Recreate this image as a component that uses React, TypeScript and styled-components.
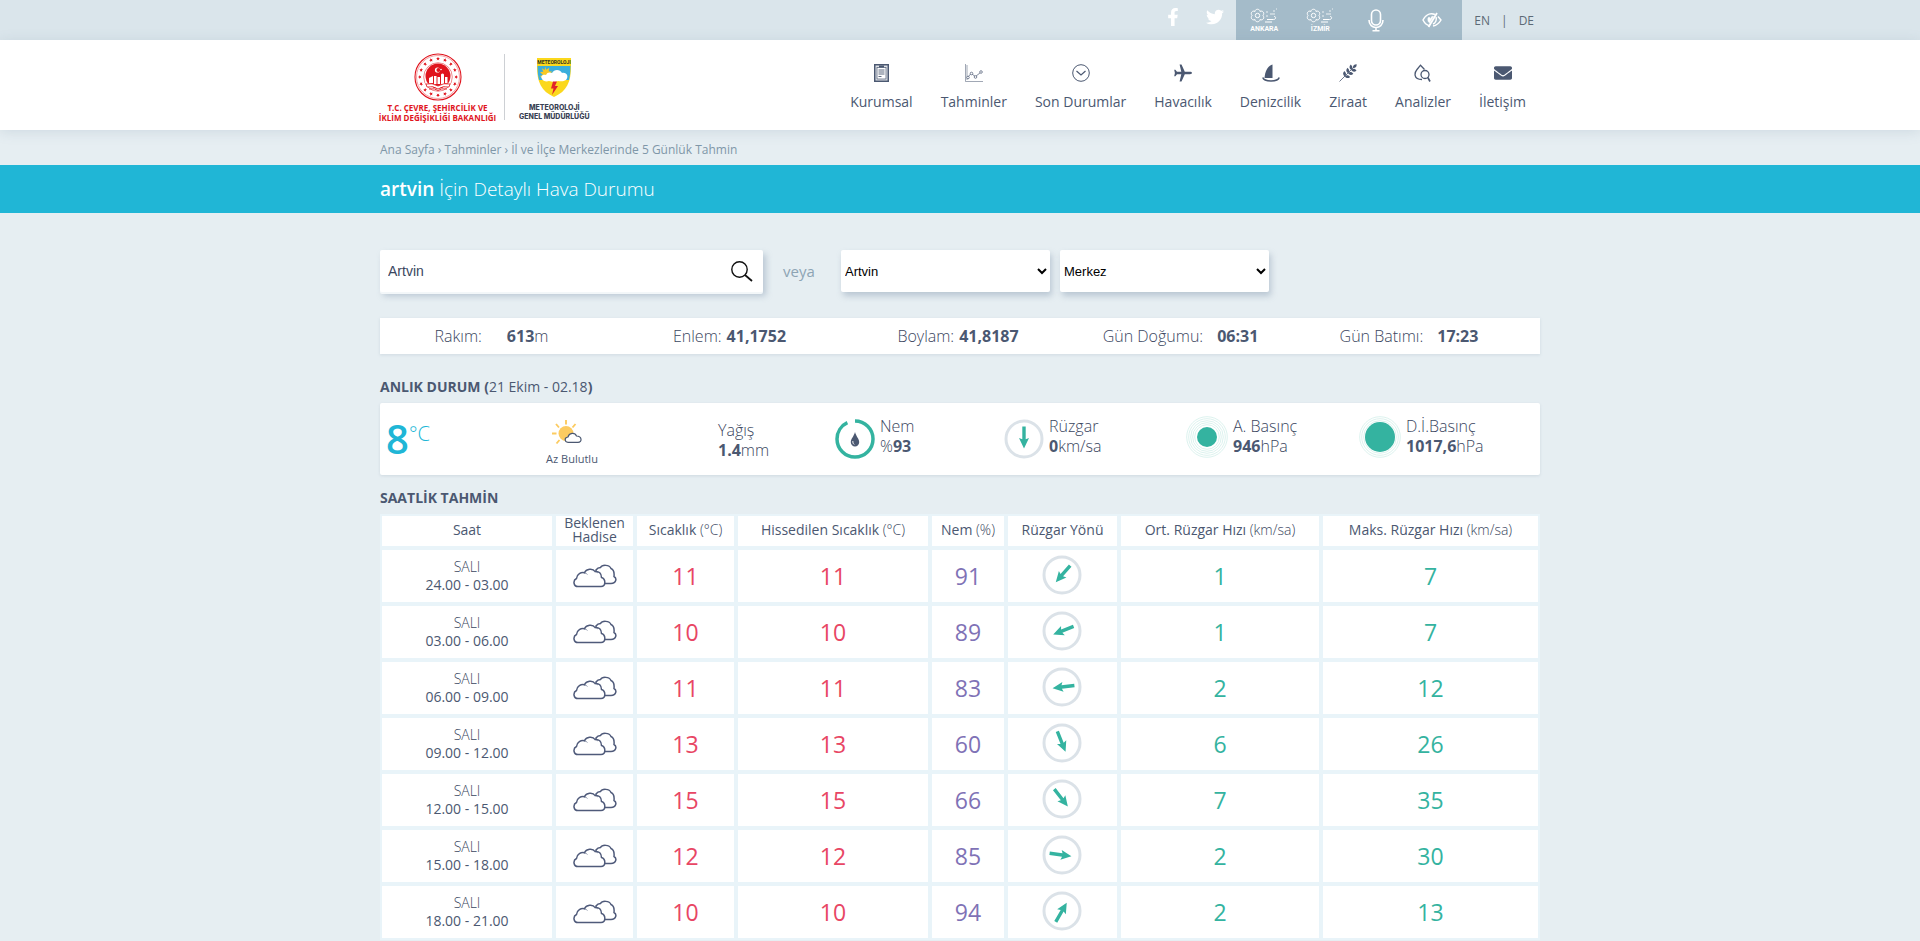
import React from 'react';
import styled, { createGlobalStyle } from 'styled-components';
import { FaFacebookF, FaTwitter, FaEnvelope } from 'react-icons/fa';

const c = {
  ink: '#4b5871',
  thin: '#3a4660',
  muted: '#8da4b4',
  cyan: '#20b6d6',
  teal: '#34b3a0',
  ring: '#dbe2e8',
  red: '#e0141d',
};

const GlobalStyle = createGlobalStyle`
  * { box-sizing: border-box; }
  html { background: #e6eef2; }
  body {
    margin: 0;
    background: #e6eef2;
    color: ${c.ink};
    font-family: "Open Sans", "Noto Sans", sans-serif;
    font-size: 14px;
    overflow-x: hidden;
  }
  a { color: inherit; text-decoration: none; }
  svg { display: block; }
  button { border: 0; background: none; padding: 0; color: inherit; cursor: pointer; }
`;

const Container = styled.div`
  max-width: 1160px;
  margin: 0 auto;
`;

const TopBar = styled.div`
  background: #dae5eb;
`;
const TopInner = styled(Container)`
  display: flex;
  justify-content: flex-end;
  height: 40px;
`;
const Social = styled.a`
  display: flex;
  justify-content: center;
  width: 42px;
  padding-top: 8px;
  color: #fff;
  font-size: 18px;
`;
const Tools = styled.div`
  display: flex;
  align-items: center;
  width: 226px;
  padding-right: 2px;
  background: #a4bbc9;
  color: #fff;
`;
const Tool = styled.button`
  display: flex;
  flex-direction: column;
  align-items: center;
  gap: 1px;
  flex: 1 1 0;
  color: #fff;
  font: bold 7px/8px "Roboto", sans-serif;
`;
const Languages = styled.nav`
  display: flex;
  align-items: center;
  gap: 11px;
  padding: 0 6px 0 12px;
  font-size: 12px;
  color: #5c6a76;
`;

const Header = styled.header`
  position: relative;
  background: #fff;
  box-shadow: 0 2px 12px rgba(100, 130, 150, 0.18);
`;
const HeaderInner = styled(Container)`
  display: flex;
  justify-content: space-between;
  height: 90px;
`;
const Logos = styled.div`
  display: flex;
  padding-top: 13px;
`;
const Ministry = styled.a`
  display: flex;
  flex-direction: column;
  align-items: center;
  width: 115px;
  color: ${c.red};
  font: 700 8px/10px "Open Sans", sans-serif;
  text-align: center;
  white-space: nowrap;
  svg { margin-bottom: 2px; }
`;
const Divider = styled.span`
  width: 1px;
  height: 66px;
  margin: 1px 14px 0 9px;
  background: #cdd0d4;
`;
const Institute = styled.a`
  display: flex;
  flex-direction: column;
  align-items: center;
  padding-top: 5px;
  color: #3a4254;
  font: 800 7px/9px "Inter", sans-serif;
  text-align: center;
  svg { margin-bottom: 6px; }
`;
const Menu = styled.nav`
  display: flex;
  gap: 28px;
  padding: 24px 14px 0 0;
`;
const MenuItem = styled.a`
  display: flex;
  flex-direction: column;
  align-items: center;
  gap: 10px;
  line-height: 20px;
  white-space: nowrap;
`;

const Breadcrumb = styled(Container)`
  height: 35px;
  padding-top: 10px;
  font-size: 12px;
  line-height: 20px;
  color: #7f97a8;
`;
const Banner = styled.div`
  background: ${c.cyan};
  color: #fff;
`;
const Title = styled.h1`
  max-width: 1160px;
  margin: 0 auto;
  font-size: 19px;
  font-weight: 300;
  line-height: 48px;
  b { font-weight: 600; }
`;

const SearchRow = styled.form`
  display: flex;
  align-items: center;
  height: 42px;
  margin-top: 37px;
`;
const SearchBox = styled.div`
  display: flex;
  align-items: center;
  width: 383px;
  height: 42px;
  padding-right: 10px;
  background: #fff;
  border-radius: 2px;
  box-shadow: 0 2px 0 #f3f7f9, 3px 4px 6px rgba(120, 140, 165, 0.4);
`;
const SearchInput = styled.input`
  flex: 1;
  min-width: 0;
  height: 100%;
  padding: 0 8px;
  border: 0;
  background: none;
  outline: none;
  color: ${c.thin};
  font: 14px "Liberation Sans", sans-serif;
`;
const Or = styled.span`
  width: 78px;
  padding-left: 20px;
  font-size: 15px;
  color: ${c.muted};
`;
const Select = styled.select`
  width: 209px;
  height: 42px;
  margin-right: 10px;
  border: 0;
  border-radius: 2px;
  background: #fff;
  color: #000;
  font: 13px "Liberation Sans", sans-serif;
  box-shadow: 2px 4px 6px rgba(120, 140, 165, 0.4);
`;

const Place = styled.section`
  display: grid;
  grid-template-columns: 223fr 253fr 204fr 241fr 216fr;
  align-items: center;
  height: 36px;
  margin-top: 26px;
  padding-right: 23px;
  background: #fff;
  box-shadow: 0 1px 3px rgba(120, 140, 165, 0.2);
  color: ${c.thin};
  font-size: 16px;
  font-weight: 300;
`;
const Fact = styled.div<{ $gap: number }>`
  display: flex;
  justify-content: center;
  gap: ${(p) => p.$gap}px;
  b { color: ${c.ink}; font-weight: 700; }
`;

const Heading = styled.h2`
  margin: 0;
  padding: 22px 0 5px;
  font-size: 14px;
  font-weight: 700;
  line-height: 22px;
  span { font-weight: 400; }
`;
const HourHeading = styled(Heading)`
  padding: 12px 0 5px;
`;

const Now = styled.section`
  display: grid;
  grid-template-columns: 160fr 172fr 117fr 169fr 182fr 173fr 181fr;
  height: 72px;
  padding-left: 6px;
  background: #fff;
  border-radius: 2px;
  box-shadow: 0 1px 3px rgba(120, 140, 165, 0.2);
`;
const Degree = styled.div`
  display: flex;
  padding-top: 16px;
  color: ${c.cyan};
  font-size: 40px;
  font-weight: 600;
  line-height: 40px;
  sup { font-size: 20px; line-height: 30px; font-weight: 300; }
`;
const Event = styled.div`
  display: flex;
  flex-direction: column;
  align-items: center;
  width: 52px;
  padding-top: 17px;
  font-size: 11px;
  line-height: 16px;
  white-space: nowrap;
  svg { margin: 0 0 6px -10px; }
`;
const Measure = styled.div<{ $top: number }>`
  display: flex;
  gap: 5px;
  padding-top: ${(p) => p.$top}px;
  color: ${c.thin};
  font-size: 16px;
  font-weight: 300;
  line-height: 20px;
  white-space: nowrap;
  b { color: ${c.ink}; font-weight: 700; }
`;
const Gauge = styled.span`
  padding-top: 3px;
`;

const Table = styled.table`
  width: 100%;
  table-layout: fixed;
  border-spacing: 0;
  text-align: center;
`;
const HeadCell = styled.th<{ $w: number }>`
  width: ${(p) => p.$w}px;
  height: 34px;
  padding: 0 0 2px;
  border: 2px solid #e9f4f9;
  background: #fff;
  font-weight: 400;
  font-size: 14px;
  line-height: 14px;
  span { color: ${c.thin}; font-weight: 300; }
`;
const Cell = styled.td<{ $color?: string }>`
  height: 56px;
  padding: 0;
  border: 2px solid #e9f4f9;
  background: #fff;
  color: ${(p) => p.$color ?? c.ink};
  font-size: ${(p) => (p.$color ? 23 : 14)}px;
  line-height: 18px;
  svg { margin: 0 auto; }
`;
const Compass = styled.div`
  padding: 0 2px 2px 0;
`;
const Day = styled.div`
  color: ${c.thin};
  font-weight: 300;
`;

const CityIcon = () => (
  <svg width="28" height="16" viewBox="0 0 28 16" fill="none" stroke="#fff">
    <path d="M5 3.500C5 .5 10 .5 10 3.500C12.500 2 15 5 13 7.500C15 10 12.500 13 10 11.500C10 14.500 5 14.500 5 11.500C2.500 13 0 10 2 7.500C0 5 2.500 2 5 3.500Z" />
    <circle cx="7.500" cy="7.500" r="2.200" />
    <path d="M17 11.500H23.500C26.500 11.500 26 8 24 8.500M15 14H22" />
    <path d="M16 4h2M16 8h2M20 6h5M23 3h2M26 1h1" opacity=".8" />
  </svg>
);

const MicIcon = () => (
  <svg width="16" height="23" viewBox="0 0 16 23" fill="none" stroke="#fff" strokeWidth="1.600">
    <rect x="3.500" y="1" width="9" height="15" rx="4.500" />
    <path d="M1 11C1 21 15 21 15 11M8 18.500V21M4.500 21.700H11.500" />
  </svg>
);

const EyeOffIcon = () => (
  <svg width="20" height="16" viewBox="0 0 20 16" fill="none" stroke="#fff" strokeWidth="1.500">
    <path d="M8 14C4 13 2 10 1 8C4 2 9 1 13 2.500M16 4.500L19 8C17 11.500 14 13.500 11 14" />
    <path d="M15 1L6.500 15" strokeWidth="1.800" />
    <path d="M6 6C5.500 8 6 10 7.500 11L11.500 4.500C9.500 4 9 5 9 7L7 5Z" fill="#fff" strokeWidth=".5" />
    <path d="M14 5C15 8 13.500 11 11 12" />
  </svg>
);

const StarRing = () => (
  <g fill={c.red}>
    {Array.from({ length: 16 }, (_, i) => (
      <path
        key={i}
        d="M0 -1.900L.55 -.6L1.900 -.6L.85 .3L1.200 1.700L0 .9L-1.200 1.700L-.85 .3L-1.900 -.6L-.55 -.6Z"
        transform={`translate(24 24) rotate(${i * 22.5}) translate(0 -18.300)`}
      />
    ))}
  </g>
);

const Emblem = () => (
  <svg width="48" height="48" viewBox="0 0 48 48">
    <circle cx="24" cy="24" r="23" fill="#fff" stroke={c.red} strokeWidth="1.100" />
    <circle cx="24" cy="24" r="21.500" fill="none" stroke={c.red} strokeWidth=".4" />
    <StarRing />
    <circle cx="24" cy="24" r="14.300" fill="none" stroke={c.red} strokeWidth=".5" />
    <circle cx="24" cy="23" r="12.500" fill={c.red} />
    <circle cx="23.500" cy="17" r="2.600" fill="#fff" />
    <circle cx="24.400" cy="17" r="2" fill={c.red} />
    <circle cx="27" cy="16.500" r=".8" fill="#fff" />
    <path d="M15 25l4-2v7h-4zM20 23h2.500v8H20zM23.500 24h2.500v7h-2.500zM27 21.500q1.500-2 3 0V31h-3zM31 24h2.500v6H31z" fill="#fff" />
    <path d="M12 31Q18 29.500 24 33Q30 29.500 36 31L35 34Q29 32.500 24 36Q19 32.500 13 34Z" fill="#fff" stroke={c.red} strokeWidth=".8" />
    <path d="M15 36Q21 35 24 37.500Q27 35 33 36" fill="none" stroke={c.red} strokeWidth=".9" />
  </svg>
);

const Shield = () => (
  <svg width="36" height="39" viewBox="0 0 36 39">
    <path d="M1 0H35V8C35 24 31 33 18 39C5 33 1 24 1 8Z" fill="#fbd81d" />
    <path d="M1.500 8H34.500Q34.500 16 33 22H3Q1.500 16 1.500 8Z" fill="#3aaedb" />
    <path d="M9 8.500l1.300 3.300 3-2-.6 3.500 3.600.4-3 2.200 1.700 3L7 21l-3-3 3-1-3-3 3.300-.2-1.500-3.500 3 1.700z" fill="#f8c822" />
    <path d="M6 21C4 18 7 16 10 17C11 14 14 14 16 15C18 11 24 11 26 15C31 14 33 19 30 22C27 24 24 23 22 23C18 25 15 23 13 23C10 24 7 23 6 21Z" fill="#fff" />
    <path d="M17 23.500h4l-2 4.500h3l-6 9 1.500-6.500H15z" fill="#e0232b" />
    <text x="18" y="6" textAnchor="middle" fontFamily="Roboto, sans-serif" fontSize="5" fontWeight="700" fill="#33341d">METEOROLOJI</text>
  </svg>
);

const BookIcon = () => (
  <svg width="15" height="18" viewBox="0 0 15 18">
    <rect width="15" height="18" fill={c.ink} />
    <rect x="1.500" y="1.500" width="12" height="15" fill="#dfe2e7" />
    <rect x="3" y="3.500" width="9" height="11.500" fill="#fff" stroke={c.ink} strokeWidth=".7" />
    <path d="M5 1.500h5v2H5z" fill={c.ink} />
    <path d="M4.500 6H10.500M4.500 8H10.500M4.500 10H10.500M4.500 12.500H7.500" stroke={c.ink} strokeWidth=".9" />
  </svg>
);

const ChartIcon = () => (
  <svg width="18" height="18" viewBox="0 0 18 18" fill="none" stroke={c.ink} strokeWidth=".7">
    <path d="M.5 0V17.500H18M2 1V16" opacity=".75" />
    <path d="M3 13L6 9.500L10.500 12.500L15.500 8.500" />
    <circle cx="3" cy="13.500" r="1.300" fill="#fff" /><circle cx="6.500" cy="9.500" r="1.300" fill="#fff" />
    <circle cx="10.500" cy="13" r="1.300" fill="#fff" /><circle cx="16" cy="8" r="1.300" fill="#fff" />
  </svg>
);

const ClockDownIcon = () => (
  <svg width="18" height="18" viewBox="0 0 18 18" fill="none" stroke={c.ink}>
    <circle cx="9" cy="9" r="8.300" />
    <path d="M4.500 7L9 11L13.500 7" strokeWidth="1.200" />
  </svg>
);

const PlaneIcon = () => (
  <svg width="18" height="18" viewBox="0 0 18 18" fill={c.ink}>
    <path d="M18 9C18 9.700 17 10.200 16 10.200H10.800L7.500 17.500H5.600L7.300 10.200H3L1.400 12.300H.2L.9 9L.2 5.700H1.400L3 7.800H7.300L5.600 .5H7.500L10.800 7.800H16C17 7.800 18 8.300 18 9Z" />
  </svg>
);

const BoatIcon = () => (
  <svg width="18" height="18" viewBox="0 0 18 18">
    <path d="M10.500 .5V14H2.500C3 8 5 2 10.500 .5Z" fill={c.ink} />
    <path d="M.8 13.500C2 18 16 18 17.200 13.500" fill="none" stroke={c.ink} strokeWidth="1.500" />
  </svg>
);

const WheatIcon = () => (
  <svg width="18" height="18" viewBox="0 0 18 18" fill={c.ink}>
    <path d="M.5 17.500L15 3" stroke={c.ink} strokeWidth=".8" />
    <path d="M17.700 .3C15 .3 13.800 1.500 14 4C16.500 4.200 17.700 3 17.700 .3Z" />
    {[0, 1, 2].map((i) => (
      <g key={i} transform={`translate(${-i * 3.2} ${i * 3.2})`}>
        <path d="M12.300 6C10 4.500 10 2.500 11.700 .6C13.900 2.500 13.900 4.300 12.300 6Z" />
        <path d="M12.300 6C13.800 8.200 15.800 8.200 17.500 6.500C15.800 4.300 14 4.300 12.300 6Z" />
      </g>
    ))}
  </svg>
);

const AnalysisIcon = () => (
  <svg width="18" height="18" viewBox="0 0 18 18" fill="none" stroke={c.ink} strokeWidth="1.300">
    <path d="M8 15.500C-1 15.500 .5 8.500 3 5.500L6.500 1.200L10.500 5.500" />
    <circle cx="11" cy="10.500" r="4" />
    <path d="M13.800 13.300L16 17.500" strokeWidth="1.700" />
  </svg>
);

const SearchIcon = () => (
  <svg width="22" height="21" viewBox="0 0 22 21" fill="none" stroke="#111" strokeWidth="1.400">
    <circle cx="8.500" cy="8.500" r="7.700" />
    <path d="M14 14L21 20" strokeWidth="1.800" />
  </svg>
);

const CloudsIcon = () => (
  <svg width="44" height="24" viewBox="0 0 44 24" fill="#fff" stroke="#4f5a7a" strokeWidth="1.500">
    <path d="M30 19.500H38C43.500 19.500 44 14 41 12.500C41.500 8 40.500 5.500 38 4.500C36.500 .5 29 .5 27.500 3.500C25 3.500 24 4.500 23 6V15Z" />
    <path d="M5 22.500C.5 22.500 -.5 16.500 3.500 14.500C4 10 8 8 11.500 8.800C13 4.500 20 4 22 7.500C26 7 28.500 9.500 28.500 13.500C33 15 33 22.500 28 22.500Z" />
    <path d="M11.500 9Q13.500 9.300 14.500 10.500M22 7.500Q24 8 25 9" fill="none" strokeWidth=".6" />
  </svg>
);

const PartlyCloudyIcon = () => (
  <svg width="30" height="25" viewBox="0 0 30 25">
    <path d="M14 0V4.500M23.500 4L20.500 7.500M4 4L7 7.500M0 13.500H4.500M4.500 23.500L7.500 20" stroke="#fccb60" strokeWidth="1.900" />
    <circle cx="14" cy="13.500" r="7.500" fill="#fccb60" />
    <path d="M16 22.300C12.500 22.300 12 17.500 16 17C17 12.500 23 12 24.500 16C30 16 30.500 22.300 26 22.300Z" fill="#fff" stroke={c.ink} strokeWidth="1.200" />
  </svg>
);

const WindIcon = ({ angle }: { angle: number }) => (
  <svg width="40" height="40" viewBox="-20 -20 40 40">
    <circle r="18" fill="#fff" stroke={c.ring} strokeWidth="3" />
    <path d="M0 -9.500L5 1L1.700 -.3V12.500H-1.700V-.3L-5 1Z" fill={c.teal} transform={`rotate(${angle})`} />
  </svg>
);

const HumidityIcon = () => (
  <svg width="40" height="40" viewBox="-20 -20 40 40">
    <circle r="18" fill="none" stroke={c.teal} strokeWidth="3.500" pathLength="100" strokeDasharray="93 7" transform="rotate(-90)" />
    <path d="M0 -7C1 -3 4.200 0 4.200 3.200A4.200 4.200 0 0 1 -4.200 3.200C-4.200 0 -1 -3 0 -7Z" fill={c.ink} />
    <path d="M-2.200 2Q-2.500 4.500 -.8 5.500" fill="none" stroke="#fff" strokeWidth=".9" />
  </svg>
);

const PressureIcon = ({ radius }: { radius: number }) => (
  <svg width="42" height="42" viewBox="-21 -21 42 42">
    {[20.3, 18.3, 16.3, 14.3, 12.3].map((r) => (
      <circle key={r} r={r} fill="#fff" stroke="#d8f1ec" strokeWidth=".9" />
    ))}
    <circle r={radius} fill={c.teal} />
  </svg>
);

const menu = [
  { label: 'Kurumsal', icon: <BookIcon /> },
  { label: 'Tahminler', icon: <ChartIcon /> },
  { label: 'Son Durumlar', icon: <ClockDownIcon /> },
  { label: 'Havacılık', icon: <PlaneIcon /> },
  { label: 'Denizcilik', icon: <BoatIcon /> },
  { label: 'Ziraat', icon: <WheatIcon /> },
  { label: 'Analizler', icon: <AnalysisIcon /> },
  { label: 'İletişim', icon: <FaEnvelope size={18} /> },
];

const facts = [
  { label: 'Rakım:', value: '613', unit: 'm', gap: 25 },
  { label: 'Enlem:', value: '41,1752', gap: 5 },
  { label: 'Boylam:', value: '41,8187', gap: 5 },
  { label: 'Gün Doğumu:', value: '06:31', gap: 14 },
  { label: 'Gün Batımı:', value: '17:23', gap: 14 },
];

const columns = [
  { label: 'Saat', width: 174 },
  { label: 'Beklenen Hadise', width: 81 },
  { label: 'Sıcaklık', unit: '(°C)', width: 101 },
  { label: 'Hissedilen Sıcaklık', unit: '(°C)', width: 194 },
  { label: 'Nem', unit: '(%)', width: 76 },
  { label: 'Rüzgar Yönü', width: 113 },
  { label: 'Ort. Rüzgar Hızı', unit: '(km/sa)', width: 202 },
  { label: 'Maks. Rüzgar Hızı', unit: '(km/sa)', width: 219 },
];

const hours = [
  { time: '24.00 - 03.00', temp: 11, hum: 91, angle: 221, avg: 1, max: 7 },
  { time: '03.00 - 06.00', temp: 10, hum: 89, angle: 248, avg: 1, max: 7 },
  { time: '06.00 - 09.00', temp: 11, hum: 83, angle: 263, avg: 2, max: 12 },
  { time: '09.00 - 12.00', temp: 13, hum: 60, angle: 158, avg: 6, max: 26 },
  { time: '12.00 - 15.00', temp: 15, hum: 66, angle: 142, avg: 7, max: 35 },
  { time: '15.00 - 18.00', temp: 12, hum: 85, angle: 98, avg: 2, max: 30 },
  { time: '18.00 - 21.00', temp: 10, hum: 94, angle: 30, avg: 2, max: 13 },
];

export default function App() {
  return (
    <>
      <GlobalStyle />
      <TopBar>
        <TopInner>
          <Social href="#" aria-label="Facebook"><FaFacebookF /></Social>
          <Social href="#" aria-label="Twitter"><FaTwitter /></Social>
          <Tools>
            <Tool><CityIcon />ANKARA</Tool>
            <Tool><CityIcon />İZMİR</Tool>
            <Tool aria-label="Sesli arama"><MicIcon /></Tool>
            <Tool aria-label="Erişilebilirlik"><EyeOffIcon /></Tool>
          </Tools>
          <Languages>
            <a href="#">EN</a><span>|</span><a href="#">DE</a>
          </Languages>
        </TopInner>
      </TopBar>
      <Header>
        <HeaderInner>
          <Logos>
            <Ministry href="#">
              <Emblem />
              <span>T.C. ÇEVRE, ŞEHİRCİLİK VE</span>
              <span>İKLİM DEĞİŞİKLİĞİ BAKANLIĞI</span>
            </Ministry>
            <Divider />
            <Institute href="#">
              <Shield />
              <span>METEOROLOJİ</span>
              <span>GENEL MÜDÜRLÜĞÜ</span>
            </Institute>
          </Logos>
          <Menu>
            {menu.map((m) => (
              <MenuItem href="#" key={m.label}>{m.icon}{m.label}</MenuItem>
            ))}
          </Menu>
        </HeaderInner>
      </Header>
      <Breadcrumb as="nav">
        <a href="#">Ana Sayfa</a> › <a href="#">Tahminler</a> › <a href="#">İl ve İlçe Merkezlerinde 5 Günlük Tahmin</a>
      </Breadcrumb>
      <Banner>
        <Title><b>artvin</b> İçin Detaylı Hava Durumu</Title>
      </Banner>
      <Container as="main">
        <SearchRow>
          <SearchBox>
            <SearchInput aria-label="Merkez ara" defaultValue="Artvin" />
            <button type="button" aria-label="Ara"><SearchIcon /></button>
          </SearchBox>
          <Or>veya</Or>
          <Select aria-label="İl"><option>Artvin</option></Select>
          <Select aria-label="İlçe"><option>Merkez</option></Select>
        </SearchRow>
        <Place>
          {facts.map((f) => (
            <Fact key={f.label} $gap={f.gap}>
              <span>{f.label}</span>
              <span><b>{f.value}</b>{f.unit}</span>
            </Fact>
          ))}
        </Place>
        <Heading>ANLIK DURUM (<span>21 Ekim - 02.18</span>)</Heading>
        <Now>
          <Degree>8<sup>°C</sup></Degree>
          <Event><PartlyCloudyIcon />Az Bulutlu</Event>
          <Measure $top={17}><div>Yağış<br /><b>1.4</b>mm</div></Measure>
          <Measure $top={13}><Gauge><HumidityIcon /></Gauge><div>Nem<br />%<b>93</b></div></Measure>
          <Measure $top={13}><Gauge><WindIcon angle={180} /></Gauge><div>Rüzgar<br /><b>0</b>km/sa</div></Measure>
          <Measure $top={13}><PressureIcon radius={10} /><div>A. Basınç<br /><b>946</b>hPa</div></Measure>
          <Measure $top={13}><PressureIcon radius={15} /><div>D.İ.Basınç<br /><b>1017,6</b>hPa</div></Measure>
        </Now>
        <HourHeading>SAATLİK TAHMİN</HourHeading>
        <Table>
          <thead>
            <tr>
              {columns.map((col) => (
                <HeadCell key={col.label} $w={col.width} scope="col">
                  {col.label}{col.unit && <span> {col.unit}</span>}
                </HeadCell>
              ))}
            </tr>
          </thead>
          <tbody>
            {hours.map((h) => (
              <tr key={h.time}>
                <Cell><Day>SALI</Day>{h.time}</Cell>
                <Cell><CloudsIcon /></Cell>
                <Cell $color="#e84664">{h.temp}</Cell>
                <Cell $color="#e84664">{h.temp}</Cell>
                <Cell $color="#7f72b6">{h.hum}</Cell>
                <Cell><Compass><WindIcon angle={h.angle} /></Compass></Cell>
                <Cell $color={c.teal}>{h.avg}</Cell>
                <Cell $color={c.teal}>{h.max}</Cell>
              </tr>
            ))}
          </tbody>
        </Table>
      </Container>
    </>
  );
}
